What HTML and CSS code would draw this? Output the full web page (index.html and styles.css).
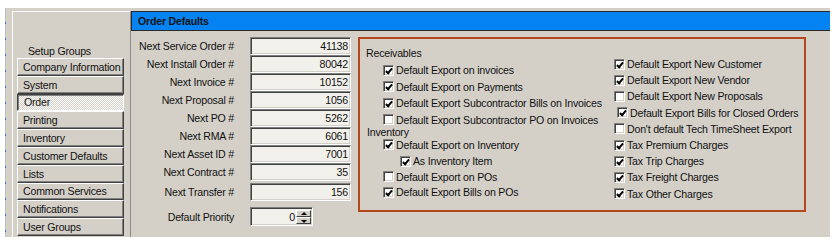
FILE: index.html
```html
<!DOCTYPE html>
<html lang="en">
<head>
    <meta charset="UTF-8">
    <title>Order Defaults</title>
    <link rel="stylesheet" href="styles.css">
</head>
<body>

    <div class="screen">
        <div class="edge"></div>
        <div class="window">

            <!-- Setup groups -->
            <div class="groups">
                <div class="groups-title">Setup Groups</div>
                <div class="group-list">
                    <div class="group-btn">Company Information</div>
                    <div class="group-btn">System</div>
                    <div class="group-btn active">Order</div>
                    <div class="group-btn">Printing</div>
                    <div class="group-btn">Inventory</div>
                    <div class="group-btn">Customer Defaults</div>
                    <div class="group-btn">Lists</div>
                    <div class="group-btn">Common Services</div>
                    <div class="group-btn">Notifications</div>
                    <div class="group-btn">User Groups</div>
                </div>
            </div>

            <!-- Order defaults -->
            <div class="main">
                <div class="title">Order Defaults</div>
                <div class="content">

                    <div class="numbers">
                        <div class="num-row"><label>Next Service Order #</label><div class="field">41138</div></div>
                        <div class="num-row"><label>Next Install Order #</label><div class="field">80042</div></div>
                        <div class="num-row"><label>Next Invoice #</label><div class="field">10152</div></div>
                        <div class="num-row"><label>Next Proposal #</label><div class="field">1056</div></div>
                        <div class="num-row"><label>Next PO #</label><div class="field">5262</div></div>
                        <div class="num-row"><label>Next RMA #</label><div class="field">6061</div></div>
                        <div class="num-row"><label>Next Asset ID #</label><div class="field">7001</div></div>
                        <div class="num-row"><label>Next Contract #</label><div class="field">35</div></div>
                        <div class="num-row transfer"><label>Next Transfer #</label><div class="field">156</div></div>
                        <div class="num-row priority">
                            <label>Default Priority</label>
                            <div class="spin">
                                <span class="spin-val">0</span>
                                <span class="spin-btns">
                                    <span class="spin-btn up"></span>
                                    <span class="spin-btn down"></span>
                                </span>
                            </div>
                        </div>
                    </div>

                    <div class="export-box">
                        <div class="col col-left">
                            <div class="heading receivables">Receivables</div>
                            <div class="check"><span class="cb on"></span>Default Export on invoices</div>
                            <div class="check"><span class="cb on"></span>Default Export on Payments</div>
                            <div class="check"><span class="cb on"></span>Default Export Subcontractor Bills on Invoices</div>
                            <div class="check"><span class="cb"></span>Default Export Subcontractor PO on Invoices</div>
                            <div class="heading inventory">Inventory</div>
                            <div class="check"><span class="cb on"></span>Default Export on Inventory</div>
                            <div class="check sub"><span class="cb on"></span>As Inventory Item</div>
                            <div class="check short"><span class="cb"></span>Default Export on POs</div>
                            <div class="check tall"><span class="cb on"></span>Default Export Bills on POs</div>
                        </div>
                        <div class="col col-right">
                            <div class="check"><span class="cb on"></span>Default Export New Customer</div>
                            <div class="check"><span class="cb on"></span>Default Export New Vendor</div>
                            <div class="check"><span class="cb"></span>Default Export New Proposals</div>
                            <div class="check nudge"><span class="cb on"></span>Default Export Bills for Closed Orders</div>
                            <div class="check"><span class="cb"></span>Don't default Tech TimeSheet Export</div>
                            <div class="check"><span class="cb on"></span>Tax Premium Charges</div>
                            <div class="check"><span class="cb on"></span>Tax Trip Charges</div>
                            <div class="check"><span class="cb on"></span>Tax Freight Charges</div>
                            <div class="check"><span class="cb on"></span>Tax Other Charges</div>
                        </div>
                    </div>

                </div>
            </div>

        </div>
    </div>

</body>
</html>
```

FILE: styles.css
```css
/* Basic Reset */
* {
    margin: 0;
    padding: 0;
    box-sizing: border-box;
}
body {
    background-color: #fff;
    font-family: "Liberation Sans", Arial, sans-serif;
    font-size: 10.6px;
    letter-spacing: -0.2px;
    color: #111;
}

/* Window frame */
.screen {
    display: flex;
    padding-top: 8px;
    padding-left: 5px;
}
.edge {
    width: 1px;
    height: 229px;
    background: repeating-linear-gradient(#b9bec6 0 14px, #2f74e8 14px 16px);
}
.window {
    display: flex;
    width: 824px;
    height: 229px;
    background-color: #d4d0c8;
    padding-top: 3px;
    padding-left: 6px;
}

/* Setup groups */
.groups {
    width: 119px;
    border-left: 1px solid #fff;
    border-top: 1px solid #fff;
    border-right: 1px solid #8a8a8a;
    padding-left: 4px;
    display: flex;
    flex-direction: column;
}
.groups-title {
    height: 14px;
    line-height: 14px;
    margin-top: 32px;
    padding-left: 11px;
}
.group-list {
    width: 107px;
    height: 178px;
    display: grid;
    grid-template-rows: repeat(10, 1fr);
}
.group-btn {
    display: flex;
    align-items: center;
    padding-left: 5px;
    border: 1px solid;
    border-color: #fff #404040 #404040 #fff;
    box-shadow: inset -1px -1px #808080;
    white-space: nowrap;
    overflow: hidden;
}
.group-btn.active {
    padding-left: 6px;
    border-color: #404040 #fff #fff #404040;
    box-shadow: inset 1px 1px #808080;
    background: conic-gradient(#fff 25%, #d4d0c8 0 50%, #fff 0 75%, #d4d0c8 0) 0 0 / 2px 2px;
}

/* Main panel */
.main {
    flex: 1;
    display: flex;
    flex-direction: column;
}
.title {
    height: 20px;
    line-height: 18px;
    border: 1px solid #2a2a2a;
    border-right: none;
    background-color: #0583f2;
    font-weight: bold;
    padding-left: 6px;
    color: #141414;
}
.content {
    display: flex;
    align-items: flex-start;
    padding-top: 6px;
}

/* Number fields */
.numbers {
    width: 220px;
}
.num-row {
    display: grid;
    grid-template-columns: 103px 101px;
    column-gap: 16px;
    align-items: center;
    height: 18px;
}
.num-row label {
    text-align: right;
    white-space: nowrap;
}
.num-row.transfer {
    margin-top: 2px;
}
.num-row.priority {
    margin-top: 6px;
    height: 19px;
}
.field,
.spin {
    height: 18px;
    border: 1px solid;
    border-color: #808080 #fff #fff #808080;
    box-shadow: inset 1px 1px #404040, inset -1px -1px #d4d0c8;
    background-color: #f1f0ea;
}
.field {
    text-align: right;
    line-height: 16px;
    padding-right: 2px;
}
.spin {
    width: 63px;
    height: 19px;
    display: flex;
    padding: 2px 1px 1px 2px;
}
.spin-val {
    flex: 1;
    text-align: right;
    line-height: 14px;
    padding-right: 1px;
}
.spin-btns {
    width: 15px;
    display: flex;
    flex-direction: column;
}
.spin-btn {
    flex: 1;
    position: relative;
    background-color: #d4d0c8;
    border: 1px solid;
    border-color: #fff #404040 #404040 #fff;
}
.spin-btn::after {
    content: "";
    position: absolute;
    left: 50%;
    top: 50%;
    margin-left: -3px;
    border-left: 3px solid transparent;
    border-right: 3px solid transparent;
}
.spin-btn.up::after {
    margin-top: -2px;
    border-bottom: 3px solid #000;
}
.spin-btn.down::after {
    margin-top: -1px;
    border-top: 3px solid #000;
}

/* Export options */
.export-box {
    margin-left: 7px;
    width: 448px;
    height: 175px;
    border: 2px solid #b5481c;
    padding: 6px 0 0 6px;
    display: flex;
}
.col-left {
    width: 248px;
}
.col-right {
    padding-top: 11px;
}
.heading {
    white-space: nowrap;
}
.heading.receivables {
    height: 17px;
    line-height: 17px;
}
.heading.inventory {
    height: 8.5px;
    line-height: 8.5px;
    padding-left: 1px;
}
.check {
    display: flex;
    align-items: center;
    height: 16.5px;
    padding-left: 17px;
    white-space: nowrap;
}
.check.sub {
    padding-left: 34px;
}
.check.short {
    height: 14px;
}
.check.tall {
    height: 17px;
}
.col-right .check {
    height: 16.2px;
    padding-left: 0;
}
.col-right .check.nudge {
    padding-left: 3px;
}

/* Classic checkbox */
.cb {
    position: relative;
    width: 11px;
    height: 11px;
    margin-right: 2px;
    flex-shrink: 0;
    background-color: #fff;
    border: 1px solid;
    border-color: #808080 #fff #fff #808080;
    box-shadow: inset 1px 1px #404040, inset -1px -1px #d4d0c8;
}
.cb.on::after {
    content: "";
    position: absolute;
    left: 3px;
    top: 1px;
    width: 2px;
    height: 5px;
    border-right: 2px solid #000;
    border-bottom: 2px solid #000;
    transform: rotate(40deg);
}
```
